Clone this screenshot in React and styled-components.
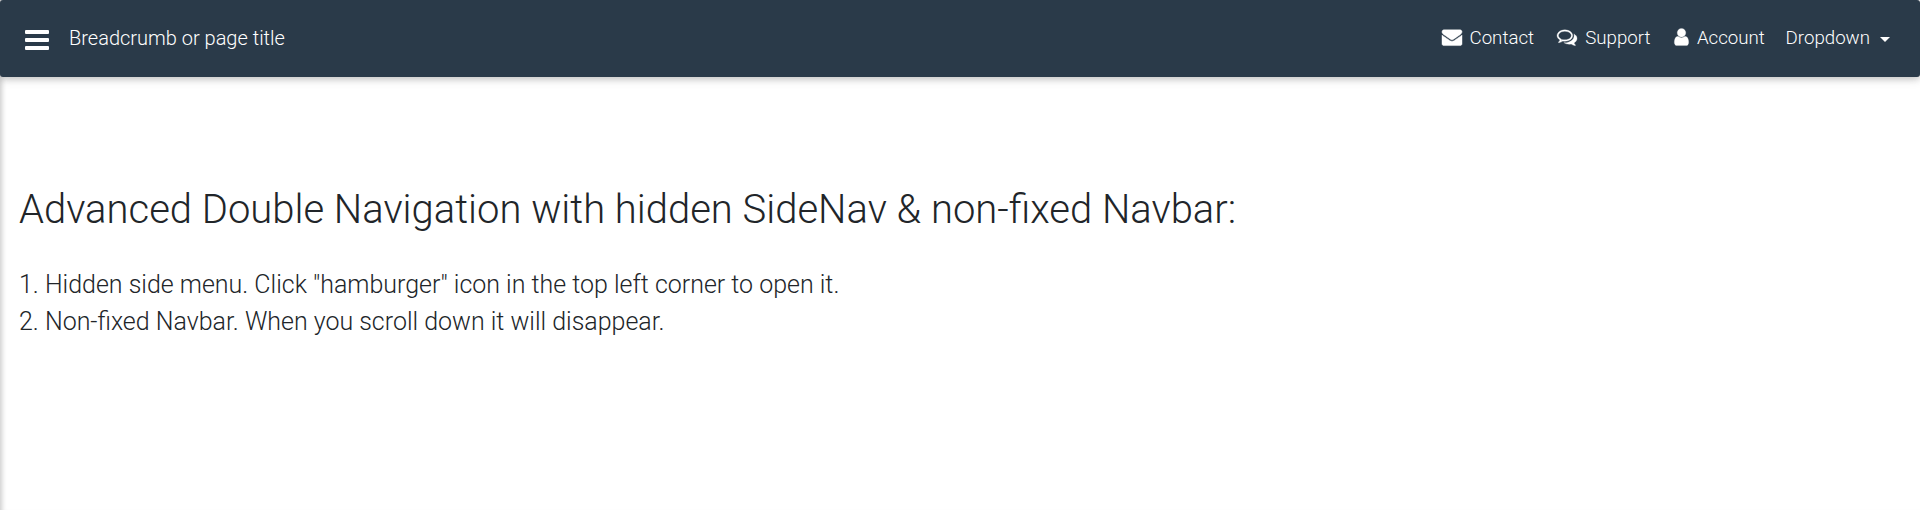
import React from 'react';
import styled, { createGlobalStyle } from 'styled-components';

const GlobalStyle = createGlobalStyle`
  * { box-sizing: border-box; }
  body { margin: 0; font-family: Roboto, sans-serif; font-weight: 300; color: #212529; background: #fff; }
`;
const Page = styled.div`
  height: 510px;
  overflow: hidden;
  box-shadow: inset 6px 0 5px -4px rgba(0, 0, 0, 0.2);
`;
const Navbar = styled.nav`
  display: flex;
  align-items: center;
  height: 77px;
  padding: 0 30px 0 25px;
  background: #2a3a49;
  color: #fff;
  border-radius: 3px;
  box-shadow: 0 2px 6px rgba(0, 0, 0, 0.16), 0 2px 12px rgba(0, 0, 0, 0.12);
`;
const MenuButton = styled.a`
  display: flex;
  flex-direction: column;
  gap: 4px;
  width: 24px;
  margin-top: 3px;
`;
const Bar = styled.span`
  height: 4px;
  border-radius: 1px;
  background: #fff;
`;
const Title = styled.div`
  margin: 0 auto 1px 20px;
  font-size: 20px;
  line-height: 24px;
`;
const Links = styled.div`
  display: flex;
  align-items: center;
  gap: 20px;
  margin-bottom: 2px;
  font-size: 18.7px;
`;
const Item = styled.a`
  display: flex;
  align-items: center;
  margin-left: ${(p) => p.$indent || 0}px;
  line-height: 28px;
`;
const Icon = styled.svg`
  width: ${(p) => p.$width}px;
  height: 20px;
  margin: 0 8px 1px 0;
  fill: currentColor;
  stroke: currentColor;
  stroke-width: ${(p) => p.$stroke || 0};
  overflow: visible;
`;
const Caret = styled.span`
  margin: 4px 0 0 10px;
  border: 5px solid transparent;
  border-top-color: #fff;
  border-bottom: 0;
`;
const Main = styled.main`
  padding: 109px 19px;
`;
const Heading = styled.h2`
  margin: 0 0 32px;
  font-size: 39.97px;
  line-height: 48px;
  font-weight: 300;
`;
const Line = styled.div`
  font-size: 24.97px;
  line-height: 37px;
`;

const ENVELOPE = 'M1792 710v794q0 66-47 113t-113 47h-1472q-66 0-113-47t-47-113v-794q44 49 101 87 362 246 497 345 57 42 92.5 65.5t94.5 48 110 24.5h2q51 0 110-24.5t94.5-48 92.5-65.5q170-123 498-345 57-39 100-87zm0-294q0 79-49 151t-122 123q-376 261-468 325-10 7-42.5 31t-54 38.5-52 32.5-57.5 27-50 9h-2q-23 0-50-9t-57.5-27-52-32.5-54-38.5-42.5-31q-91-64-262-182.5t-205-142.5q-62-42-117-115.5t-55-136.5q0-78 41.5-130t118.5-52h1472q65 0 112.5 47t47.5 113z';
const COMMENTS = 'M704 384q-153 0-286 52t-211.5 141-78.5 191q0 82 53 158t149 132l97 56-35 84q34-20 62-39l44-31 53 10q78 14 153 14 153 0 286-52t211.5-141 78.5-191-78.5-191-211.5-141-286-52zm0-128q191 0 353.5 68.5t256.5 186.5 94 257-94 257-256.5 186.5-353.5 68.5q-86 0-176-16-124 88-278 128-36 9-86 16h-3q-11 0-20.5-8t-11.5-21q-1-3-1-6.5t.5-6.5 2-6l2.5-5 3.5-5.5 4-5 4.5-5 4-4.5q5-6 23-25t26-29.5 22.5-29 25-38.5 20.5-44q-124-72-195-177t-71-224q0-139 94-257t256.5-186.5 353.5-68.5zm822 1169q10 24 20.5 44t25 38.5 22.5 29 26 29.5 23 25q1 1 4 4.5t4.5 5 4 5 3.5 5.5l2.5 5 2 6 .5 6.5-1 6.5q-3 14-13 22t-22 7q-50-7-86-16-154-40-278-128-90 16-176 16-271 0-472-132 58 4 88 4 161 0 309-45t264-129q125-92 192-212t67-254q0-77-23-152 129 71 204 178t75 230q0 120-71 224.5t-195 176.5z';
const USER = 'M1536 1399q0 109-62.5 187t-150.5 78h-854q-88 0-150.5-78t-62.5-187q0-85 8.5-160.5t31.5-152 58.5-131 94-89 134.5-34.5q131 128 313 128t313-128q76 0 134.5 34.5t94 89 58.5 131 31.5 152 8.5 160.5zm-256-887q0 159-112.5 271.5t-271.5 112.5-271.5-112.5-112.5-271.5 112.5-271.5 271.5-112.5 271.5 112.5 112.5 271.5z';

export default function App() {
  return (
    <Page>
      <GlobalStyle />
      <Navbar>
        <MenuButton aria-label="Menu"><Bar /><Bar /><Bar /></MenuButton>
        <Title>Breadcrumb or page title</Title>
        <Links>
          <Item><Icon $width={20} $stroke={40} viewBox="0 0 1792 1792"><path d={ENVELOPE} /></Icon><span>Contact</span></Item>
          <Item $indent={3.2}><Icon $width={20} $stroke={25} viewBox="0 0 1792 1792"><path d={COMMENTS} /></Icon><span>Support</span></Item>
          <Item $indent={3.3}><Icon $width={15} $stroke={20} viewBox="224 0 1344 1792"><path d={USER} /></Icon><span>Account</span></Item>
          <Item $indent={0.7}><span>Dropdown</span><Caret /></Item>
        </Links>
      </Navbar>
      <Main>
        <Heading>Advanced Double Navigation with hidden SideNav &amp; non-fixed Navbar:</Heading>
        <Line>1. Hidden side menu. Click "hamburger" icon in the top left corner to open it.</Line>
        <Line>2. Non-fixed Navbar. When you scroll down it will disappear.</Line>
      </Main>
    </Page>
  );
}
